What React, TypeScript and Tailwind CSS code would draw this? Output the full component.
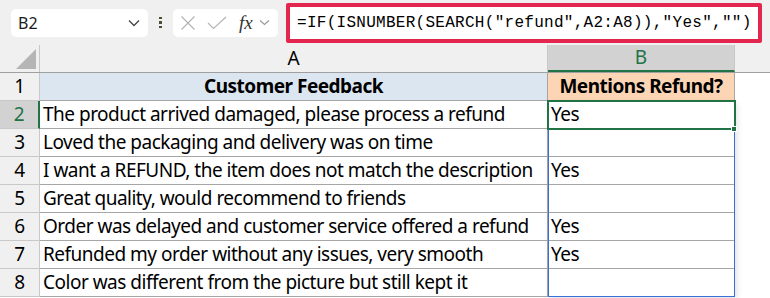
import React from "react";

const rows = [
  ["The product arrived damaged, please process a refund", "Yes"],
  ["Loved the packaging and delivery was on time", ""],
  ["I want a REFUND, the item does not match the description", "Yes"],
  ["Great quality, would recommend to friends", ""],
  ["Order was delayed and customer service offered a refund", "Yes"],
  ["Refunded my order without any issues, very smooth", "Yes"],
  ["Color was different from the picture but still kept it", ""],
];

const cellFont = { fontFamily: '"Noto Sans", sans-serif' };

const Toolbar = () => (
  <div className="flex h-[45px] items-center bg-[#f0f0f0]">
    {/* name box */}
    <div className="ml-[11px] flex h-[28px] w-[137px] items-center rounded-[5px] bg-white pl-[7px] pr-[8px]">
      <span className="flex-1 text-[16px] text-[#1b1b1b]" style={{ fontFamily: '"Noto Sans", sans-serif' }}>
        B2
      </span>
      <svg width="12" height="8" viewBox="0 0 12 8">
        <polyline points="1,1.5 6,6.5 11,1.5" fill="none" stroke="#444" strokeWidth="1.3" />
      </svg>
    </div>
    {/* dots */}
    <div className="ml-[11px] flex w-[4px] flex-col gap-[2px]">
      <span className="h-[2.5px] w-[3px] bg-[#4d4d30]" />
      <span className="h-[2.5px] w-[3px] bg-[#4d4d30]" />
      <span className="h-[2.5px] w-[3px] bg-[#4d4d30]" />
    </div>
    {/* cancel / enter / fx */}
    <div className="ml-[10px] flex h-[28px] w-[105px] items-center rounded-[5px] bg-white pl-[7px]">
      <svg width="16" height="16" viewBox="0 0 16 16">
        <path d="M1.5 1.5 L14.5 14.5 M14.5 1.5 L1.5 14.5" stroke="#b3b3b3" strokeWidth="1.1" />
      </svg>
      <svg className="ml-[11px]" width="20" height="14" viewBox="0 0 20 14">
        <polyline points="1,7 6.5,12.5 19,1" fill="none" stroke="#b3b3b3" strokeWidth="1.1" />
      </svg>
      <span
        className="ml-[12px] text-[19px] italic leading-none text-[#333]"
        style={{ fontFamily: '"Liberation Serif", serif' }}
      >
        fx
      </span>
      <svg className="ml-[6px]" width="11" height="7" viewBox="0 0 11 7">
        <polyline points="1,1.5 5.5,5.5 10,1.5" fill="none" stroke="#999" strokeWidth="1.1" />
      </svg>
    </div>
    {/* formula bar */}
    <div className="ml-[8px] flex h-[40px] w-[476px] items-center overflow-hidden rounded-[2px] border-[4px] border-[#e3264f] bg-white pl-[7px]">
      <span
        className="whitespace-nowrap text-[16px] tracking-[0.28px] text-black"
        style={{ fontFamily: '"Liberation Mono", monospace' }}
      >
        =IF(ISNUMBER(SEARCH("refund",A2:A8)),"Yes","")
      </span>
    </div>
  </div>
);

const ColumnHeaders = () => (
  <div className="flex h-[28px] border-b border-[#a0a0a0] bg-[#f0f0f0] text-[19px] text-black" style={cellFont}>
    <div className="flex w-[40px] items-end justify-end border-r border-[#c8c8c8] p-[3px]">
      <svg width="20" height="20" viewBox="0 0 20 20">
        <polygon points="20,0 20,20 0,20" fill="#b5b5b5" />
      </svg>
    </div>
    <div className="flex w-[508px] items-center justify-center border-r border-[#c8c8c8]">A</div>
    <div className="flex w-[187px] items-center justify-center border-b-2 border-r border-b-[#217346] border-r-[#c8c8c8] bg-[#d2d2d2] text-[#217346]">
      B
    </div>
    <div className="flex-1" />
  </div>
);

export default function App() {
  return (
    <div className="h-[298px] w-[770px] overflow-hidden bg-white">
      <Toolbar />
      <div className="relative">
        <ColumnHeaders />
        <div className="flex h-[28px] text-[19px] tracking-[-0.5px] text-black" style={cellFont}>
          <div className="flex w-[40px] items-center justify-center border-b border-r border-[#c8c8c8] bg-[#f0f0f0]">1</div>
          <div className="flex w-[508px] items-center justify-center border-b border-r border-[#a6a6a6] bg-[#dce6f1] font-bold">
            Customer Feedback
          </div>
          <div className="flex w-[187px] items-center justify-center border-b border-r border-[#a6a6a6] bg-[#fcd5b4] font-bold">
            Mentions Refund?
          </div>
          <div className="flex-1" />
        </div>
        {rows.map(([text, flag], i) => (
          <div key={i} className="flex h-[28px] text-[19px] tracking-[-0.5px] text-black" style={cellFont}>
            <div
              className={
                i === 0
                  ? "flex w-[40px] items-center justify-center border-b border-r-2 border-b-[#c8c8c8] border-r-[#217346] bg-[#d2d2d2] text-[#217346]"
                  : "flex w-[40px] items-center justify-center border-b border-r border-[#c8c8c8] bg-[#f0f0f0]"
              }
            >
              {i + 2}
            </div>
            <div className="flex w-[508px] items-center border-b border-r border-[#a6a6a6] pl-[3px] whitespace-nowrap">
              {text}
            </div>
            <div className="flex w-[187px] items-center border-b border-r border-[#a6a6a6] pl-[3px]">{flag}</div>
            <div className="flex-1" />
          </div>
        ))}
        {/* selected range B2:B8 */}
        <div className="pointer-events-none absolute left-[548px] top-[56px] h-[196px] w-[187px] border border-[#3a6fd8] shadow-[2px_2px_6px_rgba(0,0,0,0.12)]" />
        {/* active cell B2 */}
        <div className="pointer-events-none absolute left-[547px] top-[55px] h-[30px] w-[189px] border-2 border-[#217346]" />
        <div className="pointer-events-none absolute left-[731px] top-[81px] h-[6px] w-[6px] border border-white bg-[#217346]" />
      </div>
    </div>
  );
}
